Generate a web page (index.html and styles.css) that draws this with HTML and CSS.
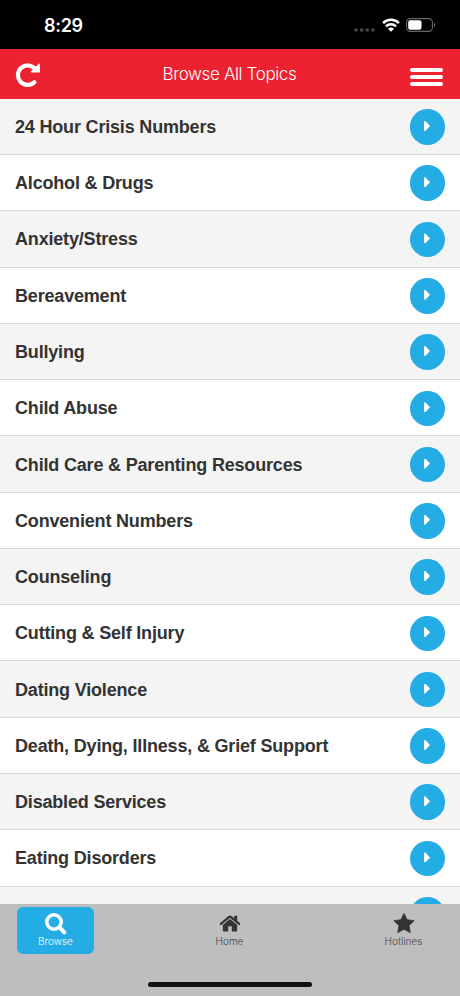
FILE: index.html
```
<!DOCTYPE html>
<html lang="en">
<head>
<meta charset="utf-8">
<title>Browse All Topics</title>
<link rel="stylesheet" href="styles.css">
</head>
<body>
<div class="app">
  <div class="status">
    <span class="time">8:29</span>
    <div class="indicators">
      <svg class="dots" width="22" height="4" viewBox="0 0 22 4" fill="#484848"><circle cx="2" cy="2" r="1.8"/><circle cx="7.7" cy="2" r="1.8"/><circle cx="13.3" cy="2" r="1.8"/><circle cx="19" cy="2" r="1.8"/></svg>
      <svg class="wifi" width="18" height="14" viewBox="0 0 18 14" fill="none" stroke="#fff" stroke-width="2.6"><path d="M1.1 5.1C5.4.7 12.6.7 16.9 5.1M4 8.3c2.8-2.8 7.2-2.8 10 0"/><path d="M6 10.8c1.8-1.6 4.2-1.6 6 0L9 13.8z" fill="#fff" stroke="none"/></svg>
      <svg class="battery" width="30" height="14" viewBox="0 0 30 14"><rect x=".6" y=".6" width="25.8" height="12.8" rx="3.6" fill="none" stroke="#666" stroke-width="1.1"/><rect x="2.2" y="2.2" width="13.3" height="9.6" rx="2" fill="#fff"/><path d="M27.8 4.6c1.9.7 1.9 4.1 0 4.8z" fill="#666"/></svg>
    </div>
  </div>
  <header class="header">
    <svg class="reload" width="26" height="26" viewBox="0 0 26 26"><path d="M19.3 21.2A9.7 9.7 0 1 1 20.3 8.2" fill="none" stroke="#fff" stroke-width="4.2" stroke-linecap="round"/><path d="M24.9 3.4v7.3q0 .7-.7.7h-7.6q-1.2-.2-.4-1.3l2.2-2.2 5.4-5.2q1-.5 1.1.7z" fill="#fff"/></svg>
    <h1 class="title">Browse All Topics</h1>
    <div class="menu"><span></span><span></span><span></span></div>
  </header>
  <ul class="list">
    <li><span class="topic">24 Hour Crisis Numbers</span><i class="go"></i></li>
    <li><span class="topic">Alcohol &amp; Drugs</span><i class="go"></i></li>
    <li><span class="topic">Anxiety/Stress</span><i class="go"></i></li>
    <li><span class="topic">Bereavement</span><i class="go"></i></li>
    <li><span class="topic">Bullying</span><i class="go"></i></li>
    <li><span class="topic">Child Abuse</span><i class="go"></i></li>
    <li><span class="topic">Child Care &amp; Parenting Resources</span><i class="go"></i></li>
    <li><span class="topic">Convenient Numbers</span><i class="go"></i></li>
    <li><span class="topic">Counseling</span><i class="go"></i></li>
    <li><span class="topic">Cutting &amp; Self Injury</span><i class="go"></i></li>
    <li><span class="topic">Dating Violence</span><i class="go"></i></li>
    <li><span class="topic">Death, Dying, Illness, &amp; Grief Support</span><i class="go"></i></li>
    <li><span class="topic">Disabled Services</span><i class="go"></i></li>
    <li><span class="topic">Eating Disorders</span><i class="go"></i></li>
    <li><span class="topic"></span><i class="go"></i></li>
  </ul>
  <footer class="footer">
    <nav class="tabs">
      <a class="tab active"><svg width="22" height="22" viewBox="0 0 22 22" fill="none" stroke="#fff"><circle cx="9" cy="9" r="7.2" stroke-width="3.5"/><path d="M14.4 14.4l4.9 4.9" stroke-width="4" stroke-linecap="round"/></svg><span>Browse</span></a>
      <a class="tab"><svg width="22" height="22" viewBox="0 0 22 22" fill="#333"><path d="M11 5.8l7.2 6v5.8q0 .8-.8.8h-4.6v-5.2H9.2v5.2H4.6q-.8 0-.8-.8v-5.8z"/><path d="M1.9 10.9L10.2 4q.8-.6 1.6 0l8.3 6.9" fill="none" stroke="#333" stroke-width="2.3" stroke-linecap="round"/><path d="M15.2 2.7h3v6.4l-3-2.5z"/><path d="M2.8 12.2L11 5.4l8.2 6.8" fill="none" stroke="#bebebe" stroke-width=".6"/></svg><span>Home</span></a>
      <a class="tab"><svg width="22" height="22" viewBox="0 0 22 22" fill="#333" stroke="#333" stroke-width=".8" stroke-linejoin="round"><path d="M11 .4l3.1 6.3 7 1-5.1 4.9 1.3 7-6.3-3.3-6.3 3.3 1.3-7L.9 7.7l7-1z"/></svg><span>Hotlines</span></a>
    </nav>
    <div class="home-bar"></div>
  </footer>
</div>
</body>
</html>
```
FILE: styles.css
```
* { box-sizing: border-box; }
body { margin: 0; font-family: "Liberation Sans", sans-serif; }
.app { display: flex; flex-direction: column; width: 460px; height: 996px; overflow: hidden; background: #fff; }
.status { flex: none; display: flex; justify-content: space-between; align-items: flex-start; height: 49px; padding: 0 24px 0 44px; background: #000; }
.time { margin-top: 14px; color: #fff; font: 600 18px/24px Inter, sans-serif; letter-spacing: -.3px; }
.indicators { display: flex; align-items: flex-start; margin-top: 18px; }
.dots { margin: 10px 6px 0 0; }
.wifi { margin-right: 6px; }
.header { flex: none; display: flex; justify-content: space-between; align-items: center; height: 50px; padding: 0 17px 0 15px; background: #ed2230; }
.reload { margin-right: 8px; }
.title { margin: 0; color: #fff; font: 300 17px/24px Inter, sans-serif; letter-spacing: -.37px; }
.menu { display: flex; flex-direction: column; gap: 3px; width: 33px; margin-top: 6px; }
.menu span { height: 4px; border-radius: 2px; background: #fff; }
.list { flex: 1; min-height: 0; margin: 0; padding: 0; list-style: none; overflow: hidden; }
.list li { display: flex; justify-content: space-between; align-items: center; height: 56.27px; padding: 1px 15px 0; border-bottom: 1px solid #d8d8d8; background: #fff; }
.list li:first-child { height: 56.1px; }
.list li:nth-child(odd) { background: #f4f4f4; }
.topic { color: #333; font-size: 18px; font-weight: 700; line-height: 24px; letter-spacing: -.18px; white-space: nowrap; }
.go { display: flex; align-items: center; justify-content: center; width: 35.5px; height: 35.5px; margin-right: -.3px; border-radius: 50%; background: #24ace4; }
.go::before { content: ""; width: 6px; height: 10px; margin: -2px 1px 0 0; background: #fff; clip-path: polygon(0 0, 20% 0, 100% 50%, 20% 100%, 0 100%); }
.footer { flex: none; display: flex; flex-direction: column; justify-content: space-between; align-items: center; height: 92.4px; padding: 3px 0 9px; background: #bebebe; }
.tabs { display: flex; justify-content: space-between; width: 425px; margin-right: 1px; }
.tab { display: flex; flex-direction: column; align-items: center; width: 77px; height: 47px; padding-top: 6px; border-radius: 6px; color: #444; font: 300 10px/13px Inter, sans-serif; }
.tab.active { background: #24ace4; color: #fff; }
.home-bar { width: 164px; height: 5px; border-radius: 3px; background: #111; }
```
